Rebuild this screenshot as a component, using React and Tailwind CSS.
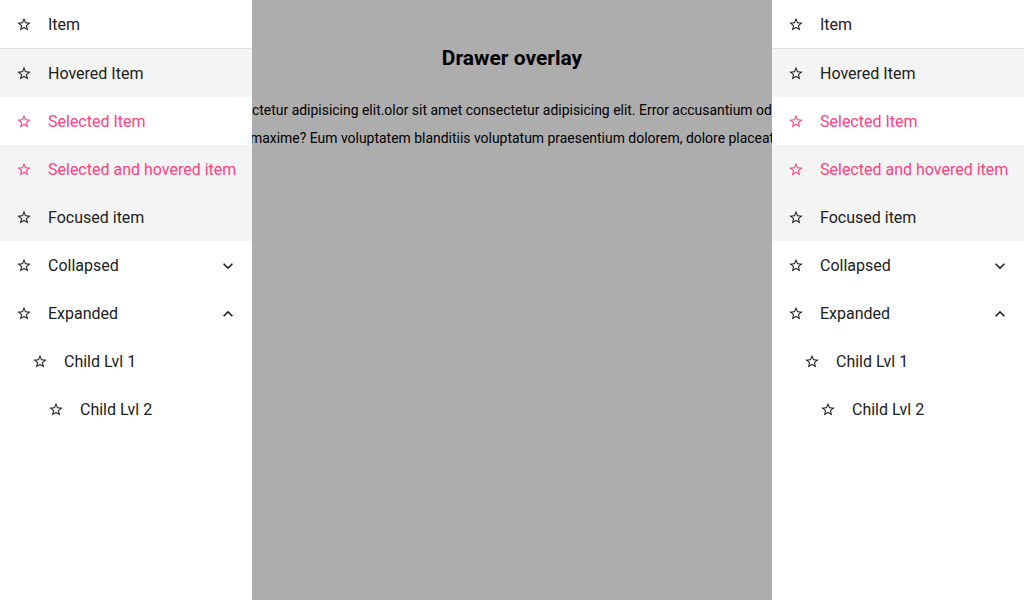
import React from "react";

const StarIcon = ({ className }) => (
  <svg viewBox="0 0 24 24" width="17" height="17" className={className} fill="currentColor">
    <path d="M22 9.24l-7.19-.62L12 2 9.19 8.63 2 9.24l5.46 4.73L5.82 21 12 17.27 18.18 21l-1.63-7.03L22 9.24zM12 15.4l-3.760 2.27 1-4.28-3.32-2.88 4.38-.38L12 6.1l1.71 4.04 4.38.38-3.32 2.88 1 4.28L12 15.4z" />
  </svg>
);

const ChevronDown = () => (
  <svg viewBox="0 0 24 24" width="20" height="20" fill="currentColor">
    <path d="M16.59 8.59L12 13.17 7.41 8.59 6 10l6 6 6-6z" />
  </svg>
);

const ChevronUp = () => (
  <svg viewBox="0 0 24 24" width="20" height="20" fill="currentColor">
    <path d="M12 8l-6 6 1.41 1.41L12 10.83l4.59 4.58L18 14z" />
  </svg>
);

const Row = ({ label, pl = "pl-[16px]", bg = "", pink = false, chevron = null }) => (
  <div className={`flex h-12 items-center pt-[1px] pr-[14px] ${pl} ${bg}`}>
    <div className={`flex w-[16px] justify-center ${pink ? "text-[#ff4081]" : "text-[#212121]"}`}>
      <StarIcon />
    </div>
    <span className={`ml-[16px] flex-1 whitespace-nowrap text-[16px] ${pink ? "text-[#ff4081]" : "text-[#212121]"}`}>{label}</span>
    {chevron === "down" && <span className="text-[#212121]"><ChevronDown /></span>}
    {chevron === "up" && <span className="text-[#212121]"><ChevronUp /></span>}
  </div>
);

const Drawer = () => (
  <div className="flex h-full w-[252px] shrink-0 flex-col bg-white">
    <Row label="Item" />
    <div className="h-px bg-[#e0e0e0]" />
    <Row label="Hovered Item" bg="bg-[#f4f4f4]" />
    <Row label="Selected Item" pink />
    <Row label="Selected and hovered item" pink bg="bg-[#f4f4f4]" />
    <Row label="Focused item" bg="bg-[#f4f4f4]" />
    <Row label="Collapsed" chevron="down" />
    <Row label="Expanded" chevron="up" />
    <Row label="Child Lvl 1" pl="pl-[32px]" />
    <Row label="Child Lvl 2" pl="pl-[48px]" />
  </div>
);

export default function App() {
  return (
    <div
      className="flex h-[600px] w-[1024px] overflow-hidden bg-[#adadad]"
      style={{ fontFamily: "Roboto, 'Noto Sans', sans-serif" }}
    >
      <Drawer />
      <div className="flex min-w-0 flex-1 flex-col overflow-hidden text-black">
        <h1 className="mt-[44px] text-center text-[21px] font-bold leading-[28px]">Drawer overlay</h1>
        <div className="mt-[24px] whitespace-nowrap text-[13.95px] leading-[28px]">
          <p className="ml-0">ctetur adipisicing elit.olor sit amet consectetur adipisicing elit. Error accusantium odio</p>
          <p className="-ml-[2px]">maxime? Eum voluptatem blanditiis voluptatum praesentium dolorem, dolore placeat</p>
        </div>
      </div>
      <Drawer />
    </div>
  );
}
